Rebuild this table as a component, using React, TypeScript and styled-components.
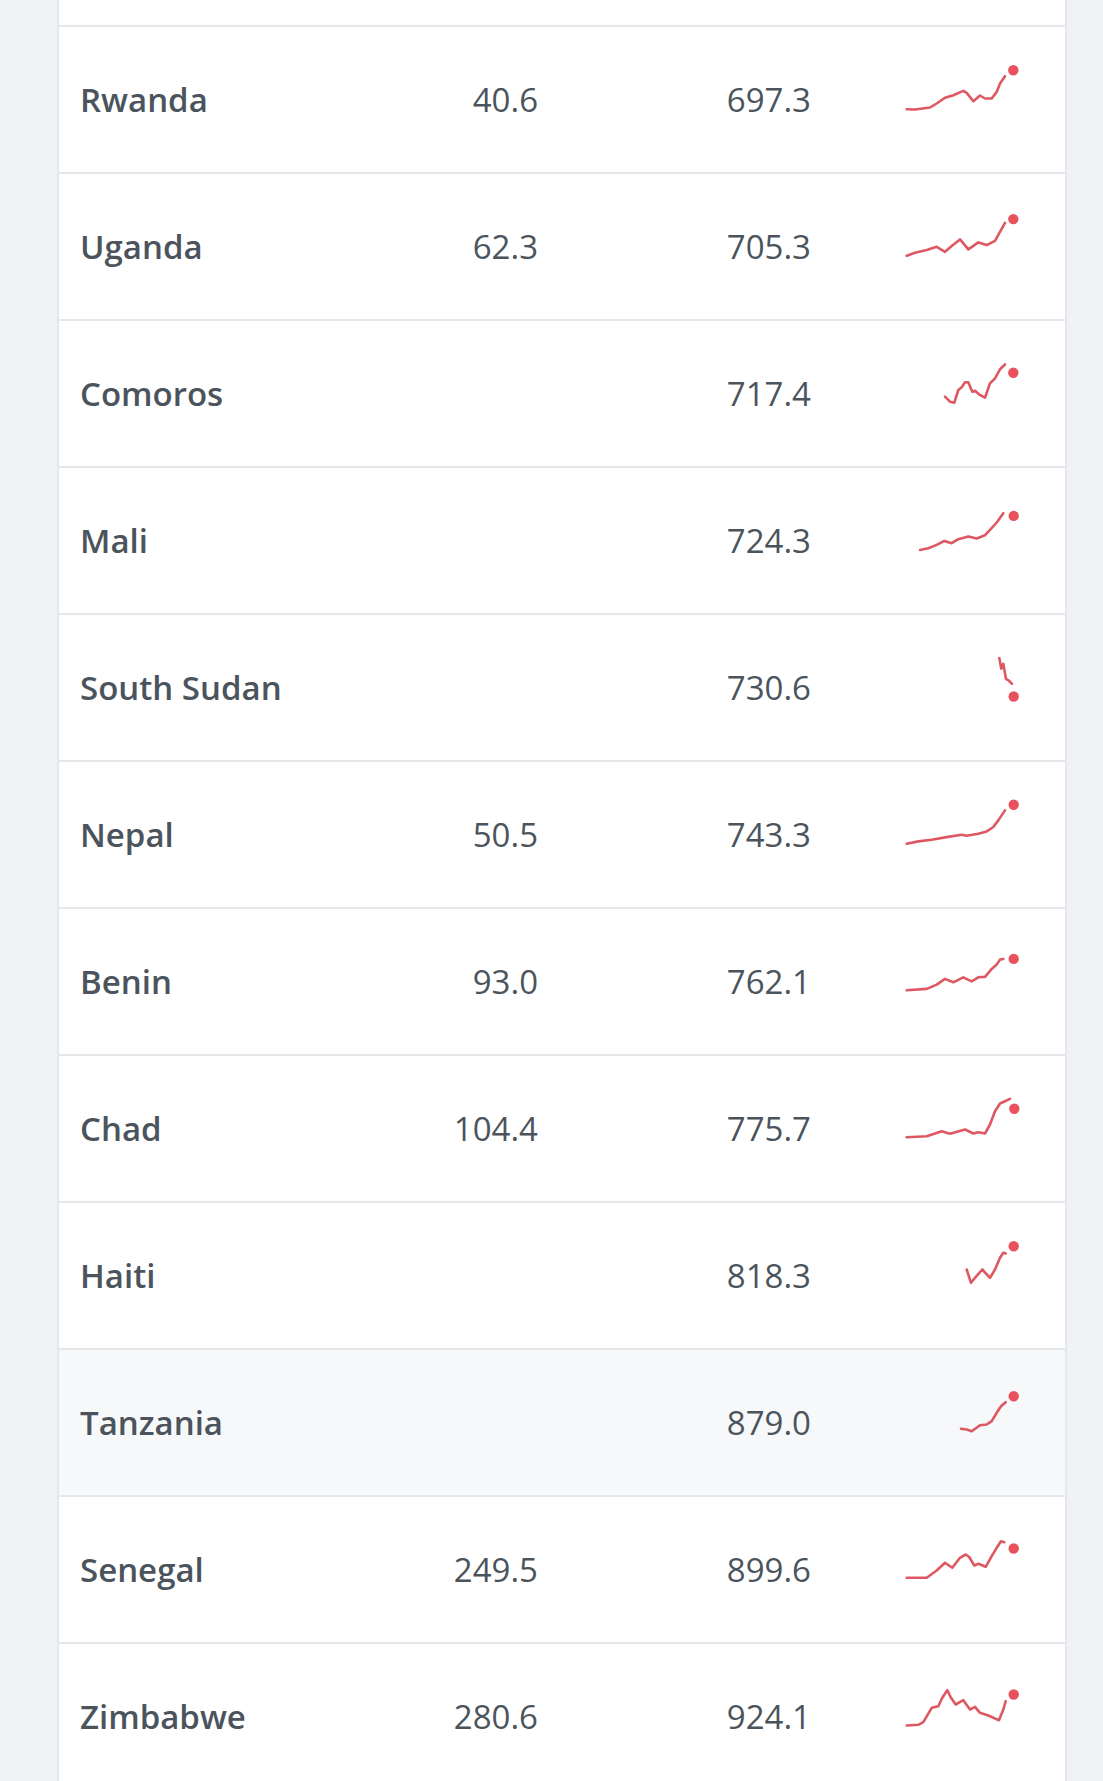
import React from "react";
import styled, { createGlobalStyle } from "styled-components";

const GlobalStyle = createGlobalStyle`
  html, body {
    margin: 0;
    padding: 0;
    background: #f0f2f5;
  }
  body {
    font-family: "Open Sans", "Liberation Sans", Arial, sans-serif;
    color: #4a535b;
    -webkit-font-smoothing: antialiased;
  }
`;

const Page = styled.div`
  display: flex;
  padding-left: 57px;
  min-height: 1781px;
  overflow: hidden;
`;

const Card = styled.div`
  width: 1010px;
  box-sizing: border-box;
  background: #ffffff;
  border-left: 2px solid #e4e8eb;
  border-right: 2px solid #e4e8eb;
  display: flex;
  flex-direction: column;
`;

const TailRow = styled.div`
  height: 25px;
  background: #ffffff;
`;

const Row = styled.div<{ $highlight?: boolean }>`
  display: grid;
  grid-template-columns: 298px 160px 273px 1fr 130px;
  align-items: center;
  height: 145px;
  flex-shrink: 0;
  padding: 0 40px 0 21px;
  border-top: 2px solid #e4e8eb;
  background: ${(p) => (p.$highlight ? "#f7f8fa" : "#ffffff")};
`;

const Name = styled.div`
  font-size: 33px;
  font-weight: 600;
  color: #4b545c;
  white-space: nowrap;
`;

const Num = styled.div`
  font-size: 33px;
  font-weight: 400;
  color: #4b545c;
  text-align: right;
  white-space: nowrap;
`;

const Spark = styled.svg`
  display: block;
  grid-column: 5;
  overflow: visible;
`;

type Pt = [number, number];

interface Item {
  name: string;
  a?: string;
  b: string;
  line: Pt[];
  dot: Pt;
  highlight?: boolean;
}

const data: Item[] = [
  {
    name: "Rwanda",
    a: "40.6",
    b: "697.3",
    line: [
      [11.7, 81.7], [20, 82], [35, 80], [41.7, 76], [50, 70.3], [58.3, 67.7],
      [68.3, 63.4], [71.7, 65.4], [78.3, 73.7], [85, 68], [90, 71], [96.7, 71],
      [101.7, 64.4], [105, 56], [110, 48.7],
    ],
    dot: [118.3, 42.7],
  },
  {
    name: "Uganda",
    a: "62.3",
    b: "705.3",
    line: [
      [11.7, 81.3], [20, 78.3], [31.7, 75.6], [41.7, 72.3], [50, 77.3], [56.7, 71.6],
      [65, 64.9], [73.3, 74.9], [83.3, 67.9], [91.7, 70.6], [100, 66.3], [110, 48.3],
    ],
    dot: [118.3, 44.6],
  },
  {
    name: "Comoros",
    b: "717.4",
    line: [
      [50, 75.2], [55, 80.2], [59.3, 81.2], [63.3, 68.5], [66.7, 65.8], [70, 60.8],
      [73.3, 60.8], [77.3, 70.2], [80, 69.2], [84, 72.8], [90, 76.2], [95, 61.8],
      [100, 56.8], [105, 47.8], [110, 43],
    ],
    dot: [118.3, 51.2],
  },
  {
    name: "Mali",
    b: "724.3",
    line: [
      [25, 81.4], [33.3, 79.7], [41.7, 76.4], [49.3, 72.4], [56.7, 74.7], [63.3, 70.7],
      [73.3, 68], [81.7, 70], [90, 66.7], [95, 61.4], [101.7, 54], [108.3, 44.7],
    ],
    dot: [118.7, 47.4],
  },
  {
    name: "South Sudan",
    b: "730.6",
    line: [
      [104.3, 42.6], [106.3, 53.3], [108.3, 48.3], [111, 63.3], [113.7, 65], [117, 68.3],
    ],
    dot: [118.7, 81],
  },
  {
    name: "Nepal",
    a: "50.5",
    b: "743.3",
    line: [
      [11.7, 81.2], [23.3, 78.9], [36.7, 77.2], [50, 74.9], [66.7, 72.2], [71.7, 73.2],
      [83.3, 71.2], [91.7, 68.9], [98.3, 64.5], [103.3, 57.9], [110, 47.9],
    ],
    dot: [118.7, 42.2],
  },
  {
    name: "Benin",
    a: "93.0",
    b: "762.1",
    line: [
      [11.7, 80.8], [31.7, 79.4], [41.7, 75.1], [50, 69.4], [58.3, 72.8], [68.3, 67.8],
      [76.7, 71.8], [83.3, 67.8], [90, 67.4], [96.7, 59.4], [101.7, 55.1], [105, 50.1],
      [108.3, 49.4],
    ],
    dot: [118.7, 49.4],
  },
  {
    name: "Chad",
    a: "104.4",
    b: "775.7",
    line: [
      [11.7, 80.7], [31.7, 79.7], [46.7, 74.7], [55, 77.3], [70, 73], [78.3, 77],
      [83.3, 75.7], [90, 77], [95, 68], [100, 54.7], [105, 47], [110, 44.7], [115, 42.3],
    ],
    dot: [119.3, 52.3],
  },
  {
    name: "Haiti",
    b: "818.3",
    line: [
      [71.7, 66], [76, 79.3], [80, 74.3], [87.3, 66], [95, 74.3], [100, 66],
      [105, 54.3], [108.3, 49.3], [110.7, 50],
    ],
    dot: [118.7, 42.7],
  },
  {
    name: "Tanzania",
    b: "879.0",
    highlight: true,
    line: [
      [66, 78.3], [71.7, 79], [76.7, 80.7], [85, 74.7], [91.7, 74], [96.7, 70.7],
      [101.7, 62.3], [106, 55.7], [110.7, 51.7],
    ],
    dot: [118.7, 45.7],
  },
  {
    name: "Senegal",
    a: "249.5",
    b: "899.6",
    line: [
      [11.7, 80.3], [31.7, 80.3], [41.7, 73], [50, 65.3], [57.3, 70.3], [65, 60.3],
      [70.7, 57], [74, 59.3], [79.3, 68], [83.3, 66.3], [90.7, 69.3], [96.7, 58.7],
      [101.7, 50.3], [106, 43.7], [109.3, 44.7],
    ],
    dot: [118.7, 51],
  },
  {
    name: "Zimbabwe",
    a: "280.6",
    b: "924.1",
    line: [
      [11.7, 81], [23.3, 80.3], [28.3, 77.7], [36.7, 63.3], [43.3, 61.7], [47.3, 53.3],
      [52.3, 45.7], [56, 53.3], [60.7, 60], [68.3, 55.7], [75, 65], [80, 62.3],
      [85, 68.3], [93.3, 71], [104, 75.7], [108.3, 65], [110.7, 56.7],
    ],
    dot: [118.7, 50],
  },
];

const Sparkline: React.FC<{ line: Pt[]; dot: Pt; bg: string }> = ({ line, dot, bg }) => (
  <Spark width={130} height={80} viewBox="0 32.5 130 80">
    <polyline
      points={line.map((p) => p.join(",")).join(" ")}
      fill="none"
      stroke="#de5862"
      strokeWidth={2.6}
      strokeLinejoin="round"
      strokeLinecap="round"
    />
    <circle cx={dot[0]} cy={dot[1]} r={7} fill={bg} />
    <circle cx={dot[0]} cy={dot[1]} r={5.2} fill="#e8525d" />
  </Spark>
);

export default function App() {
  return (
    <>
      <GlobalStyle />
      <Page>
        <Card>
          <TailRow />
          {data.map((d) => (
            <Row key={d.name} $highlight={d.highlight}>
              <Name>{d.name}</Name>
              <Num>{d.a ?? ""}</Num>
              <Num>{d.b}</Num>
              <Sparkline line={d.line} dot={d.dot} bg={d.highlight ? "#f7f8fa" : "#ffffff"} />
            </Row>
          ))}
        </Card>
      </Page>
    </>
  );
}
